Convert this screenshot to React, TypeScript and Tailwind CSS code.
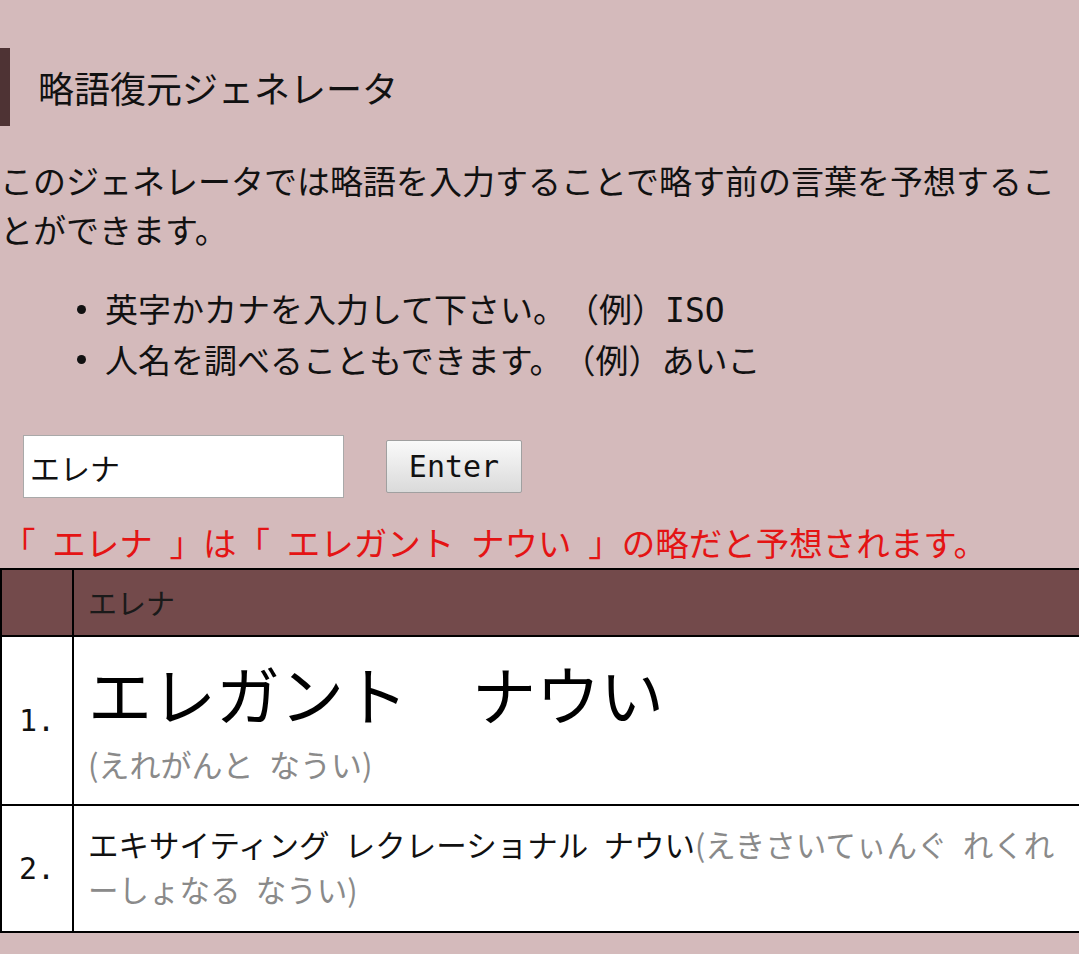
export default function App() {
  const jp = { fontFamily: '"Noto Sans CJK JP", "Noto Sans", sans-serif' };
  const mono = { fontFamily: '"DejaVu Sans Mono", "Liberation Mono", monospace' };
  const sp = "\u2002";

  return (
    <div
      className="w-[1079px] h-[954px] overflow-hidden bg-[#d4babb] text-[#111] [text-spacing-trim:space-all]"
      style={jp}
    >
      {/* Title */}
      <div className="mt-[48px] h-[78px] flex items-center border-l-[10px] border-[#4e3334] pl-[28px]">
        <h1 className="text-[36px] font-normal leading-none">略語復元ジェネレータ</h1>
      </div>

      <p className="mt-[30px] text-[33px] leading-[49px]">
        このジェネレータでは略語を入力することで略す前の言葉を予想することができます。
      </p>

      <ul className="mt-[30px] text-[33px] leading-[48px]">
        <li className="flex items-center">
          <span className="ml-[77px] mr-[19px] w-[9px] h-[9px] rounded-full bg-[#111]" />
          <span>
            英字かカナを入力して下さい。（例）<span style={mono}>ISO</span>
          </span>
        </li>
        <li className="flex items-center">
          <span className="ml-[77px] mr-[19px] w-[9px] h-[9px] rounded-full bg-[#111]" />
          <span>人名を調べることもできます。（例）あいこ</span>
        </li>
      </ul>

      {/* Form */}
      <div className="mt-[52px] flex items-center pl-[23px]">
        <input
          type="text"
          defaultValue="エレナ"
          className="w-[321px] h-[63px] bg-white border border-[#a9a9a9] px-[6px] text-[30px] outline-none"
          style={jp}
        />
        <button
          className="ml-[42px] w-[136px] h-[53px] border border-[#a0a0a0] rounded-[2px] bg-gradient-to-b from-[#fafafa] to-[#dadada] text-[30px] text-[#111]"
          style={mono}
        >
          Enter
        </button>
      </div>

      <p className="mt-[22px] pl-[2px] text-[33.5px] leading-[44px] text-[#e41414] whitespace-nowrap">
        「{sp}エレナ{sp}」は「{sp}エレガント{sp}ナウい{sp}」の略だと予想されます。
      </p>

      {/* Results */}
      <table className="mt-[4px] w-[1090px] border-collapse border-2 border-black bg-white">
        <thead>
          <tr className="bg-[#734a4b] h-[67px]">
            <th className="w-[72px] border-2 border-black" />
            <th className="border-2 border-black text-left font-normal pl-[14px] text-[29px] text-[#1a1a1a]">
              エレナ
            </th>
          </tr>
        </thead>
        <tbody>
          <tr className="h-[169px]">
            <td className="border-2 border-black align-middle text-center text-[30px]" style={mono}>
              1.
            </td>
            <td className="border-2 border-black align-top pt-[17px] pl-[14px] pr-[16px]">
              <div className="text-[64px] leading-[76px] text-black">エレガント　ナウい</div>
              <div className="mt-[13px] text-[31px] leading-[42px] text-[#8a8a8a]">(えれがんと{sp}なうい)</div>
            </td>
          </tr>
          <tr className="h-[127px]">
            <td className="border-2 border-black align-middle text-center text-[30px]" style={mono}>
              2.
            </td>
            <td className="border-2 border-black align-top pt-[16px] pl-[14px] pr-[16px] text-[30.5px] leading-[45px]">
              <span>エキサイティング{sp}レクレーショナル{sp}ナウい</span>
              <span className="text-[#8a8a8a]">(えきさいてぃんぐ{sp}れくれーしょなる{sp}なうい)</span>
            </td>
          </tr>
        </tbody>
      </table>
    </div>
  );
}
